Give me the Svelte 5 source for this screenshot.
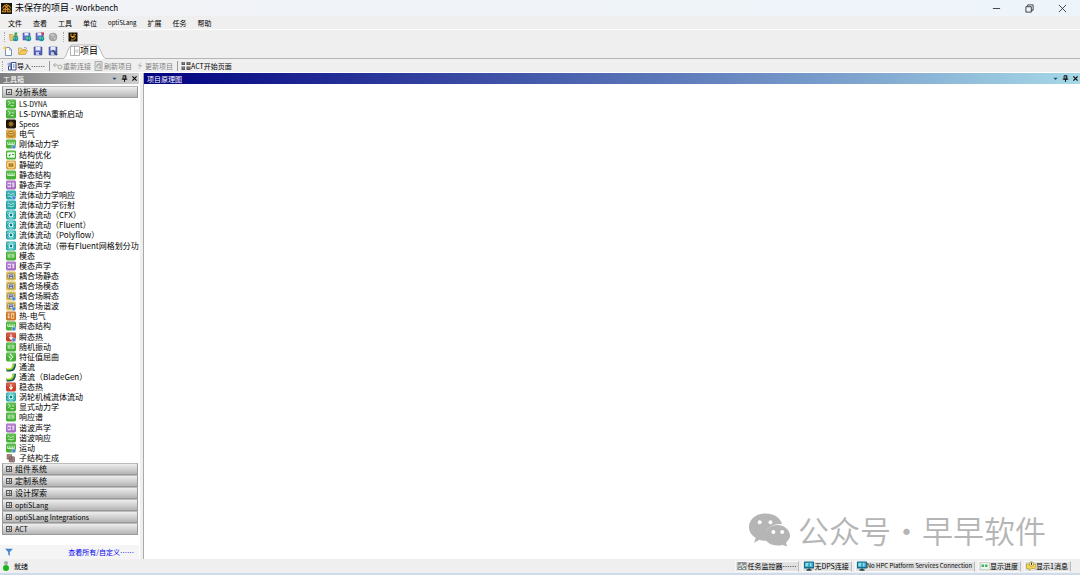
<script lang="ts">
	type Item = { name: string; icon: string; color: string };

	const menus = ['文件', '查看', '工具', '单位', 'optiSLang', '扩展', '任务', '帮助'];

	const green = '#45b035';
	const teal = '#21a5a9';
	const purple = '#a66bc4';
	const gold = '#d9a13c';
	const red = '#c8402c';

	const systems: Item[] = [
		{ name: 'LS-DYNA', icon: 'dyna', color: green },
		{ name: 'LS-DYNA重新启动', icon: 'dyna', color: green },
		{ name: 'Speos', icon: 'speos', color: '#17120a' },
		{ name: '电气', icon: 'coil', color: gold },
		{ name: '刚体动力学', icon: 'beamClock', color: green },
		{ name: '结构优化', icon: 'optimize', color: green },
		{ name: '静磁的', icon: 'magnet', color: gold },
		{ name: '静态结构', icon: 'beam', color: green },
		{ name: '静态声学', icon: 'sound', color: purple },
		{ name: '流体动力学响应', icon: 'waveClock', color: teal },
		{ name: '流体动力学衍射', icon: 'wave', color: teal },
		{ name: '流体流动（CFX）', icon: 'fluid', color: teal },
		{ name: '流体流动（Fluent）', icon: 'fluid', color: teal },
		{ name: '流体流动（Polyflow）', icon: 'fluid', color: teal },
		{ name: '流体流动（带有Fluent网格划分功', icon: 'fluid', color: teal },
		{ name: '模态', icon: 'modal', color: green },
		{ name: '模态声学', icon: 'sound', color: purple },
		{ name: '耦合场静态', icon: 'coupled', color: '#e2c44f' },
		{ name: '耦合场模态', icon: 'coupled', color: '#e2c44f' },
		{ name: '耦合场瞬态', icon: 'coupledClock', color: '#e2c44f' },
		{ name: '耦合场谐波', icon: 'coupledClock', color: '#e2c44f' },
		{ name: '热-电气', icon: 'heatCoil', color: '#cb7226' },
		{ name: '瞬态结构', icon: 'beamClock', color: green },
		{ name: '瞬态热', icon: 'heatClock', color: red },
		{ name: '随机振动', icon: 'modal', color: green },
		{ name: '特征值屈曲', icon: 'buckle', color: green },
		{ name: '通流', icon: 'blade', color: 'none' },
		{ name: '通流（BladeGen）', icon: 'blade', color: 'none' },
		{ name: '稳态热', icon: 'heat', color: red },
		{ name: '涡轮机械流体流动', icon: 'fluid', color: teal },
		{ name: '显式动力学', icon: 'dyna', color: green },
		{ name: '响应谱', icon: 'modal', color: green },
		{ name: '谐波声学', icon: 'sound', color: purple },
		{ name: '谐波响应', icon: 'wave', color: green },
		{ name: '运动', icon: 'beamClock', color: green },
		{ name: '子结构生成', icon: 'substructure', color: 'none' }
	];

	const groups = ['组件系统', '定制系统', '设计探索', 'optiSLang', 'optiSLang Integrations', 'ACT'];

	const statusItems = [
		{ name: '任务监控器……', icon: 'monitor' },
		{ name: '无DPS连接', icon: 'screen' },
		{ name: 'No HPC Platform Services Connection', icon: 'screen' },
		{ name: '显示进度', icon: 'progress' },
		{ name: '显示1消息', icon: 'message' }
	];

	let expanded = $state(true);

	// Latin-only labels are set one size smaller than Chinese ones
	function isLatin(text: string) {
		return /^[\w\s-]+$/.test(text);
	}
</script>

{#snippet systemIcon(icon: string, color: string)}
	<svg class="icon" viewBox="0 0 18 18" aria-hidden="true">
		{#if color !== 'none'}
			<rect x="0" y="1" width="18" height="16" rx="2.5" fill={color} />
			{#if icon !== 'speos'}
				<rect x="1" y="2" width="16" height="6" rx="2" fill="#fff" opacity="0.15" />
			{/if}
		{/if}
		<g fill="none" stroke="#e6fbe0" stroke-width="1.5">
			{#if icon === 'dyna'}
				<path d="M4 4l4 3-4 4M8 12h6M11 6l3 2" />
			{:else if icon === 'speos'}
				<path d="M9 3v12M3 9h12M5 5l8 8M13 5l-8 8" stroke="#d79729" stroke-width="1.2" />
				<circle cx="9" cy="9" r="2" fill="#17120a" stroke="#e8a52c" />
			{:else if icon === 'coil'}
				<ellipse cx="9" cy="9" rx="6" ry="5" fill="#f0cb72" stroke="#a06a16" />
				<path d="M5 8h8M5 11h8" stroke="#a06a16" />
			{:else if icon === 'beam' || icon === 'beamClock'}
				<path d="M3 6v4h12V6M6 6v4M9 6v4M12 6v4" />
			{:else if icon === 'optimize'}
				<rect x="3" y="5" width="12" height="8" fill="#f2fff0" />
				<path d="M5 11l3-3M11 8h3" stroke="#268a27" stroke-width="2" />
			{:else if icon === 'magnet'}
				<rect x="3" y="4" width="12" height="10" rx="3" stroke="#fff0b8" />
				<path d="M7 6v6M11 6v6" stroke="#85510c" />
			{:else if icon === 'sound'}
				<path d="M3 5h6v8H3z" fill="#f7e8ff" stroke="none" />
				<path d="M5 7v4M7 7v4" stroke="#8a4bae" />
				<path d="M11 6h3v6h-3M11 9h3" stroke="#fff" />
			{:else if icon === 'wave' || icon === 'waveClock'}
				<path d="M3 7c3-4 4 4 7 1s3-1 5 0M3 12c3-3 5 2 8 0s3-1 4 0" />
			{:else if icon === 'fluid'}
				<path d="M2 6c4-4 10-4 14 0M2 12c4 4 10 4 14 0" stroke="#8fe3dd" />
				<circle cx="9" cy="9" r="3.5" fill="#0c7983" stroke="#e8fffb" stroke-width="2" />
			{:else if icon === 'modal'}
				<path d="M4 6v6M7 5v8M11 5v8M14 6v6" />
			{:else if icon === 'coupled' || icon === 'coupledClock'}
				<rect x="3" y="4" width="12" height="10" rx="2" fill="#d8dade" stroke="#8c8249" />
				<path d="M6 13V7h6v6M6 10h6" stroke="#525489" />
			{:else if icon === 'heatCoil'}
				<path d="M5 4v8M3 10l2 3 2-3" stroke="#fff2dc" />
				<rect x="10" y="5" width="4" height="8" stroke="#ffe0a4" />
			{:else if icon === 'heat' || icon === 'heatClock'}
				<path d="M9 4v8M6 9l3 4 3-4" stroke="#fff" stroke-width="2" />
			{:else if icon === 'buckle'}
				<path d="M7 3l5 6-5 6M5 8l3 3" stroke-width="2" />
			{:else if icon === 'blade'}
				<path d="M1 14h6c5 0 8-4 8-11" stroke="#174a55" stroke-width="6" />
				<path d="M1 13h6c4 0 7-4 7-10" stroke="#50c33a" stroke-width="4" />
				<path d="M1 12h6c3 0 5-3 6-8" stroke="#eee34b" stroke-width="2" />
			{:else if icon === 'substructure'}
				<path d="M2 3h8v8H2zM6 7h9v9H6z" fill="#b9a19b" stroke="#7c5550" />
				<path d="M5 4v7M9 7v9M12 7v9M6 12h9" stroke="#695a5a" stroke-width="1" />
			{/if}
		</g>
		{#if icon.endsWith('Clock')}
			<circle cx="14" cy="14" r="3.5" fill="#4b83d7" stroke="#dceaff" />
		{/if}
	</svg>
{/snippet}

{#snippet toolIcon(icon: string)}
	<svg class="tool-icon" viewBox="0 0 20 20" aria-hidden="true">
		{#if icon === 'logo'}
			<rect width="20" height="20" fill="#18140c" />
			<path d="M10 2l3 5H7zM10 7l-3 5h6zM6 10l-4 6h7zM14 10l4 6h-7zM7 3L2 10M13 3l5 7" fill="none" stroke="#df9822" stroke-width="1.8" />
		{:else if icon === 'openWeb' || icon === 'saveWeb' || icon === 'sendWeb'}
			{#if icon === 'openWeb'}
				<path d="M1 5h6l2 2h8v10H2z" fill="#efc667" stroke="#b18732" />
			{:else}
				<path d="M2 2h14v14H2z" fill="#6773cb" stroke="#343c91" />
				<path d="M5 2h8v5H5z" fill="#e5ecff" />
			{/if}
			<circle cx="13" cy="13" r="5.5" fill="#1790ae" />
			<path d="M10 9l3 2-2 4-3-2M14 10l3 2-2 4" fill="#74cf78" />
			{#if icon === 'sendWeb'}<path d="M11 1h7v7z" fill="#d8374b" />{/if}
			{#if icon === 'openWeb'}<path d="M11 7V1h6l-2 6z" fill="#37a44d" />{/if}
		{:else if icon === 'globe'}
			<circle cx="10" cy="10" r="8" fill="#aaa" stroke="#919191" />
			<path d="M5 5l5-2 3 4-4 3zM12 10l4 2-3 4z" fill="#c7c7c7" />
		{:else if icon === 'chip'}
			<path d="M1 1h18v18H1z" fill="#191307" />
			<path d="M6 3v6h6V4M7 12l6-3 2 3-4 4H6M13 4l3 2" fill="none" stroke="#dda12c" stroke-width="2" />
		{:else if icon === 'new'}
			<path d="M5 3h8l4 4v12H5z" fill="#fff" stroke="#5070a4" stroke-width="1.5" />
			<path d="M13 3v5h4" fill="#dbe5ff" stroke="#5070a4" />
			<path d="M4 0v8M0 4h8" stroke="#efc742" stroke-width="2" />
		{:else if icon === 'open'}
			<path d="M1 17V4h6l2 3h7v4" fill="#f3da86" stroke="#b58728" />
			<path d="M2 17l4-8h13l-4 8z" fill="#f7c95c" stroke="#b98625" />
			<path d="M12 4c3-3 5 0 5 2" fill="none" stroke="#648cb6" stroke-width="1.5" />
		{:else if icon === 'save' || icon === 'saveAs'}
			<path d="M2 2h16v16H2z" fill="#5767bf" stroke="#313f91" />
			<path d="M5 2h10v7H5z" fill="#e5edff" />
			<path d="M6 12h8v6H6z" fill="#bec8e8" />
			<path d="M12 13h2v4h-2z" fill="#343c83" />
			{#if icon === 'saveAs'}<path d="M9 8l9 10" stroke="#474f67" stroke-width="3" />{/if}
		{:else if icon === 'import'}
			<path d="M3 10h5v8H3zM9 3h9v15H9z" fill="#f5f7ff" stroke="#3f4e8d" stroke-width="2" />
			<path d="M1 6h7M6 3l3 3-3 3M12 8h3M12 12h3" fill="none" stroke="#4560bc" stroke-width="2" />
		{:else if icon === 'connect'}
			<path d="M1 8h9M5 4L1 8l4 4" fill="none" stroke="#aaa" stroke-width="2" />
			<circle cx="14" cy="12" r="4" fill="none" stroke="#aaa" stroke-width="2" />
		{:else if icon === 'refresh'}
			<path d="M2 1h14v18H2z" fill="#e2e2e2" stroke="#aaa" stroke-width="2" />
			<path d="M6 13V8l6-3v5M9 14h4v-3" fill="none" stroke="#999" stroke-width="2" />
		{:else if icon === 'update'}
			<path d="M13 2L5 10h5l-4 8 9-10h-5z" fill="#bbb" />
		{:else if icon === 'act'}
			<path d="M1 2h7v6H1zM11 2h8v6h-8zM1 11h7v7H1zM11 11h8v7h-8z" fill="#565656" />
			<path d="M3 4h4M13 4h4M3 14h4M13 14h4" stroke="#aaa" stroke-width="2" />
		{:else if icon === 'tab'}
			<path d="M1 1h18v18H1zM9 1v18M9 10h7" fill="#fff" stroke="#999" stroke-width="1.5" />
			<path d="M12 6h5v8h-5z" fill="#ddd" />
		{:else if icon === 'monitor'}
			<rect x="1" y="2" width="18" height="16" fill="#8b9292" />
			<path d="M2 10h4l3-5 2 8 3-4h4M4 15h4M12 15h4" fill="none" stroke="#e8ecea" stroke-width="2" />
		{:else if icon === 'screen'}
			<rect x="0" y="1" width="20" height="14" rx="1" fill="#176c88" />
			<path d="M2 3h16v9H2z" fill="#36a8cb" />
			<path d="M3 4h6l-2 7H3zM12 4h3v7h-3z" fill="#94dcea" />
			<path d="M10 15v3M5 18h10" stroke="#263b43" stroke-width="3" />
		{:else if icon === 'progress'}
			<path d="M1 3h18v14H1z" fill="#edf6ed" stroke="#b0bcb0" />
			<path d="M3 7h5v5H3zM10 7h5v5h-5z" fill="#43af67" />
		{:else if icon === 'message'}
			<path d="M1 6h18v9h-8l-5 4v-4H1z" fill="#f4d554" stroke="#a58a23" />
			<circle cx="11" cy="6" r="4.5" fill="#fff1a3" stroke="#76672a" />
			<path d="M11 3v5" stroke="#3e392d" stroke-width="2" />
		{/if}
	</svg>
{/snippet}

{#snippet panelButtons()}
	<span class="panel-buttons">
		<button aria-label="窗口位置"><svg viewBox="0 0 10 10"><path d="M2 4h6L5 7z" fill="#274b78" /></svg></button>
		<button aria-label="自动隐藏"><svg viewBox="0 0 10 10"><path d="M3 1h4v5H3zM1 6h8M5 6v4M6 1v5" fill="none" stroke="#111" stroke-width="1.3" /></svg></button>
		<button aria-label="关闭面板"><svg viewBox="0 0 10 10"><path d="M2 2l6 6M8 2L2 8" stroke="#111" stroke-width="1.8" /></svg></button>
	</span>
{/snippet}

<div class="workbench">
	<header class="title-bar">
		{@render toolIcon('logo')}
		<span class="title">未保存的项目 <small>- Workbench</small></span>
		<div class="window-buttons">
			<button aria-label="最小化"><svg viewBox="0 0 10 10"><path d="M1 5h8" /></svg></button>
			<button aria-label="还原"><svg viewBox="0 0 10 10"><path d="M3 3V1h6v6H7M1 3h6v6H1z" /></svg></button>
			<button aria-label="关闭"><svg viewBox="0 0 10 10"><path d="M1 1l8 8M9 1L1 9" /></svg></button>
		</div>
	</header>

	<nav class="menu-bar">
		{#each menus as menu}
			<button class:latin={isLatin(menu)}>{menu}</button>
		{/each}
	</nav>

	<div class="web-bar">
		<span class="grip"></span>
		<button aria-label="从存储库打开">{@render toolIcon('openWeb')}</button>
		<button aria-label="保存到存储库">{@render toolIcon('saveWeb')}</button>
		<button aria-label="发送更改">{@render toolIcon('sendWeb')}</button>
		<button aria-label="管理连接" disabled>{@render toolIcon('globe')}</button>
		<span class="grip second"></span>
		<button aria-label="optiSLang">{@render toolIcon('chip')}</button>
	</div>

	<div class="tab-bar">
		<button aria-label="新建">{@render toolIcon('new')}</button>
		<button aria-label="打开">{@render toolIcon('open')}</button>
		<button aria-label="保存">{@render toolIcon('save')}</button>
		<button aria-label="另存为">{@render toolIcon('saveAs')}</button>
		<button class="tab">
			<svg class="tab-shape" viewBox="0 0 46 15" preserveAspectRatio="none" aria-hidden="true">
				<path d="M0 15C5 13 5 1 10 1H35C40 1 41 13 46 15" fill="#fff" stroke="#b5b5b5" />
			</svg>
			{@render toolIcon('tab')}
			<span>项目</span>
		</button>
	</div>

	<div class="project-bar">
		<span class="grip"></span>
		<button>{@render toolIcon('import')}导入……</button>
		<span class="divider"></span>
		<button disabled>{@render toolIcon('connect')}重新连接</button>
		<button disabled>{@render toolIcon('refresh')}刷新项目</button>
		<button disabled>{@render toolIcon('update')}更新项目</button>
		<span class="divider"></span>
		<button>{@render toolIcon('act')}ACT开始页面</button>
	</div>

	<div class="content">
		<aside class="toolbox">
			<div class="panel-header">
				<span>工具箱</span>
				{@render panelButtons()}
			</div>
			<div class="toolbox-body">
				<button class="group open" aria-expanded={expanded} onclick={() => (expanded = !expanded)}>
					<span class="box" class:plus={!expanded}></span>分析系统
				</button>
				{#if expanded}
					<ul class="systems">
						{#each systems as item}
							<li>
								<button>
									{@render systemIcon(item.icon, item.color)}
									<span class:label-latin={isLatin(item.name) && !/[\u4e00-\u9fff]/.test(item.name)}>{item.name}</span>
								</button>
							</li>
						{/each}
					</ul>
				{/if}
				{#each groups as group}
					<button class="group" aria-expanded="false">
						<span class="box plus"></span>
						<span class:label-latin={isLatin(group)}>{group}</span>
					</button>
				{/each}
			</div>
			<div class="toolbox-footer">
				<button aria-label="过滤">
					<svg viewBox="0 0 10 10"><path d="M0 1h10L6 5v5L4 8V5z" fill="#4385ce" /></svg>
				</button>
				<a href="#all">查看所有/自定义……</a>
			</div>
		</aside>

		<main class="schematic">
			<div class="panel-header">
				<span>项目原理图</span>
				{@render panelButtons()}
			</div>
			<div class="canvas">
				<div class="watermark">
					<svg viewBox="0 0 42 34" aria-hidden="true">
						<path d="M17 0C7 0 0 6 0 14c0 5 3 9 7 11l-2 5 6-3c2 1 4 1 7 1C13 18 22 10 34 11 32 4 25 0 17 0z" fill="#b5b5b5" />
						<path d="M29 12c-7 0-13 5-13 11s6 10 13 10c2 0 4 0 5-1l5 2-1-4c2-2 4-4 4-7 0-6-6-11-13-11z" fill="#b5b5b5" />
						<g fill="#fff">
							<circle cx="11" cy="9" r="2" /><circle cx="22" cy="9" r="2" />
							<circle cx="25" cy="19" r="2" /><circle cx="34" cy="19" r="2" />
						</g>
					</svg>
					<span>公众号</span><span class="dot">·</span><span>早早软件</span>
				</div>
			</div>
		</main>
	</div>

	<footer class="status-bar">
		<svg class="light" viewBox="0 0 6 10" aria-hidden="true">
			<circle cx="3" cy="2" r="2" fill="#aaa" /><circle cx="3" cy="7" r="3" fill="#17b51b" />
		</svg>
		<span>就绪</span>
		<div class="status-buttons">
			{#each statusItems as item}
				<button class:latin={isLatin(item.name)}>{@render toolIcon(item.icon)}{item.name}</button>
			{/each}
		</div>
	</footer>
</div>

<style>
	:global(body) {
		background: #efefef;
	}

	.workbench {
		display: flex;
		flex-direction: column;
		min-height: 100vh;
		box-sizing: border-box;
		border-bottom: 2px solid #cfdbea;
		font: 7px/10px "Noto Sans CJK SC", "Noto Sans", sans-serif;
		color: #000;
		background: #efefef;
	}

	button {
		display: flex;
		align-items: center;
		padding: 0;
		border: 0;
		background: none;
		font: inherit;
		color: inherit;
		white-space: nowrap;
	}

	.latin {
		font-size: 6px;
	}

	.label-latin {
		font-size: 7px;
	}

	.tool-icon {
		display: block;
		flex: none;
		width: 10px;
		height: 10px;
	}

	.title-bar {
		display: flex;
		align-items: center;
		height: 16px;
		padding-left: 1px;
		background: linear-gradient(90deg, #f2f3f7, #edf4fa);
	}

	.title-bar > .tool-icon {
		width: 11px;
		height: 11px;
	}

	.title {
		margin-left: 3px;
		font-size: 9px;
		line-height: 14px;
	}

	.title small {
		font-size: 8px;
	}

	.window-buttons {
		display: flex;
		gap: 24px;
		margin-left: auto;
		margin-right: 13px;
	}

	.window-buttons svg {
		width: 9px;
		height: 9px;
		fill: none;
		stroke: #333;
	}

	.menu-bar {
		display: flex;
		gap: 11px;
		height: 13px;
		padding-left: 8px;
		border-bottom: 1px solid #fff;
	}

	.menu-bar button {
		height: 14px;
	}

	.web-bar {
		display: flex;
		align-items: center;
		gap: 3px;
		height: 14px;
		padding-left: 4px;
	}

	.grip {
		flex: none;
		width: 1px;
		height: 10px;
		border-left: 1px dotted #aaa;
	}

	.second {
		margin-left: 2px;
	}

	.tab-bar {
		display: flex;
		align-items: center;
		gap: 5px;
		height: 14px;
		padding-left: 3px;
		border-bottom: 1px solid #b5b5b5;
	}

	.tab {
		position: relative;
		height: 15px;
		padding: 0 8px 0 7px;
		font-size: 9px;
	}

	.tab .tool-icon,
	.tab span {
		position: relative;
	}

	.tab .tab-shape {
		position: absolute;
		inset: 0;
		width: 100%;
		height: 100%;
	}

	.project-bar {
		display: flex;
		align-items: center;
		gap: 3px;
		height: 13px;
		padding-left: 2px;
		border-bottom: 1px solid #fff;
	}

	.project-bar button:disabled {
		color: #808080;
	}

	.divider {
		width: 1px;
		height: 10px;
		margin-left: 1px;
		background: #999;
	}

	.content {
		display: flex;
		flex: 1;
	}

	.toolbox {
		display: flex;
		flex-direction: column;
		flex: none;
		width: 139px;
		border-right: 1px solid #fff;
	}

	.panel-header {
		display: flex;
		align-items: center;
		justify-content: space-between;
		height: 11px;
		padding: 0 1px 0 3px;
		color: #fff;
	}

	.toolbox .panel-header {
		background: linear-gradient(90deg, #7e7e7e, #cfcfcf);
	}

	.panel-buttons {
		display: flex;
		gap: 3px;
	}

	.panel-buttons svg {
		width: 7px;
		height: 7px;
	}

	.toolbox-body {
		flex: 1;
		padding: 2px 0 0 2px;
		background: #fff;
	}

	.group {
		gap: 3px;
		width: 136px;
		height: 12px;
		padding-left: 3px;
		border: 1px solid #999;
		border-top-color: #bbb;
		background: linear-gradient(#eee, #b5b5b5);
		font-size: 8px;
		line-height: 10px;
	}

	.group.open {
		margin-bottom: 1px;
	}

	.box {
		display: block;
		width: 4px;
		height: 4px;
		border: 1px solid #555;
		background: linear-gradient(#555, #555) center / 2px 1px no-repeat;
	}

	.box.plus {
		background:
			linear-gradient(#777, #777) center / 4px 1px no-repeat,
			linear-gradient(#777, #777) center / 1px 4px no-repeat;
	}

	.systems {
		display: grid;
		grid-auto-rows: minmax(0, 1fr);
		width: 136px;
		height: 364px;
		margin: 0;
		padding: 0;
		list-style: none;
		font-size: 8px;
		line-height: 10px;
	}

	.systems button {
		gap: 3px;
		height: 100%;
		padding-left: 4px;
	}

	.icon {
		flex: none;
		width: 10px;
		height: 10px;
	}

	.toolbox-footer {
		display: flex;
		align-items: center;
		justify-content: space-between;
		height: 14px;
		padding: 0 5px;
		background: #f5f5f5;
	}

	.toolbox-footer svg {
		width: 8px;
		height: 8px;
	}

	.toolbox-footer a {
		color: #0000f0;
		text-decoration: none;
	}

	.schematic {
		display: flex;
		flex: 1;
		flex-direction: column;
		margin-left: 3px;
		border-left: 1px solid #aaa;
		background: #fff;
	}

	.schematic .panel-header {
		background: linear-gradient(90deg, #000080, #a6d8e7);
	}

	.canvas {
		display: flex;
		flex: 1;
		align-items: flex-end;
		justify-content: flex-end;
	}

	.watermark {
		display: flex;
		align-items: center;
		margin: 0 34px 9px 0;
		font: 350 31px/40px "Noto Sans CJK SC", sans-serif;
		color: #b5b5b5;
	}

	.watermark svg {
		width: 41px;
		height: 34px;
		margin-right: 8px;
	}

	.dot {
		width: 31px;
		text-align: center;
	}

	.status-bar {
		display: flex;
		align-items: center;
		height: 14px;
		padding: 0 9px 0 3px;
	}

	.light {
		width: 6px;
		height: 10px;
		margin-right: 5px;
	}

	.status-buttons {
		display: flex;
		gap: 3px;
		margin-left: auto;
	}

	.status-buttons button {
		height: 11px;
		padding: 0 2px 0 1px;
		border: 1px solid #f9f9f9;
		border-right-color: #bbb;
		background: #e1e1e1;
	}
</style>
